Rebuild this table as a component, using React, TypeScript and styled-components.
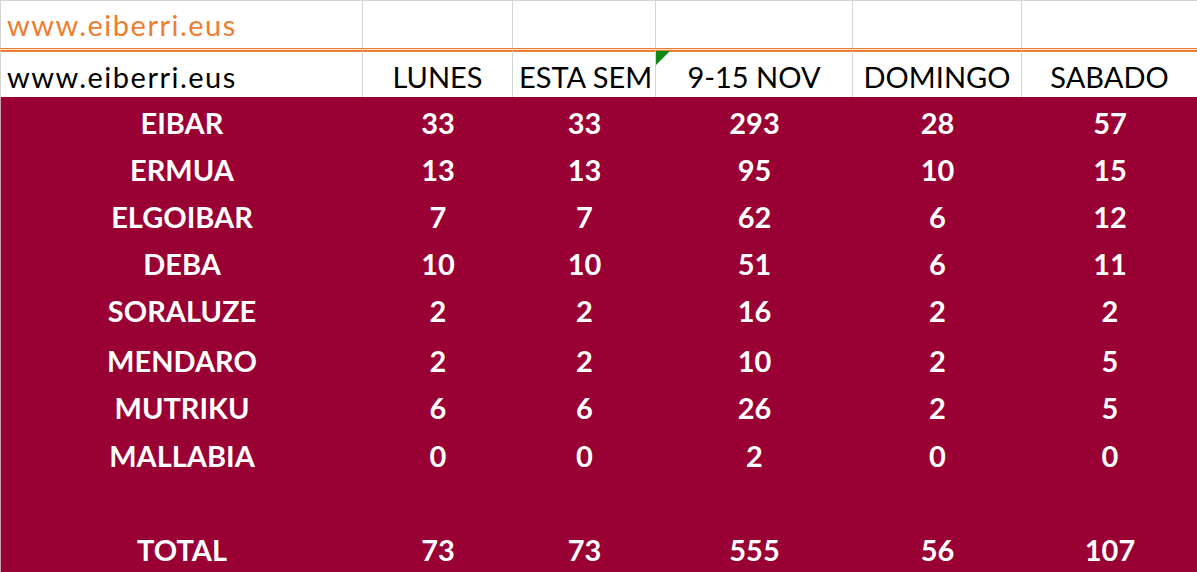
import React from 'react'
import styled, { createGlobalStyle } from 'styled-components'

const GlobalStyle = createGlobalStyle`
  html, body {
    margin: 0;
    padding: 0;
    background: #ffffff;
  }
  body {
    font-family: Lato, 'Open Sans', sans-serif;
  }
`

const COLS = '362px 150px 143px 197px 169px 176px'

const Sheet = styled.div`
  width: 1197px;
  height: 572px;
  overflow: hidden;
  background: #ffffff;
`

const TitleRow = styled.div`
  display: grid;
  grid-template-columns: ${COLS};
  height: 47px;
  border-top: 1px solid #d4d4d4;
`

const DoubleRule = styled.div`
  height: 1px;
  background: #ed7d31;
  border-bottom: 1px solid #fbe3cf;
  box-shadow: 0 2px 0 #ed7d31;
  margin-bottom: 1px;
`

const HeaderRow = styled.div`
  display: grid;
  grid-template-columns: ${COLS};
  height: 46px;
`

const WhiteCell = styled.div<{ $align?: 'left' | 'center'; $pt?: number }>`
  position: relative;
  display: flex;
  align-items: center;
  justify-content: ${(p) => (p.$align === 'left' ? 'flex-start' : 'center')};
  padding-left: ${(p) => (p.$align === 'left' ? '6px' : '0')};
  padding-top: ${(p) => p.$pt ?? 0}px;
  border-left: 1px solid #d4d4d4;
  overflow: hidden;
  white-space: nowrap;
  font-size: 29px;
  color: #000000;
`

const SiteText = styled.span<{ $orange?: boolean }>`
  color: ${(p) => (p.$orange ? '#ed7d31' : '#000000')};
  letter-spacing: 1.5px;
`

const ErrorFlag = styled.span`
  position: absolute;
  top: 0;
  left: 0;
  width: 0;
  height: 0;
  border-top: 14px solid #118811;
  border-right: 14px solid transparent;
`

const Body = styled.div`
  background: #990033;
  padding-top: 2px;
  height: 100%;
  border-left: 1px solid #c9a0ae;
`

const DataRow = styled.div<{ $h: number }>`
  display: grid;
  grid-template-columns: ${COLS};
  height: ${(p) => p.$h}px;
`

const DataCell = styled.div`
  display: flex;
  align-items: center;
  justify-content: center;
  color: #ffffff;
  font-weight: 700;
  font-size: 29px;
  white-space: nowrap;
`

const rows: { name: string; vals: (number | string)[]; h: number }[] = [
  { name: 'EIBAR', vals: [33, 33, 293, 28, 57], h: 47 },
  { name: 'ERMUA', vals: [13, 13, 95, 10, 15], h: 47 },
  { name: 'ELGOIBAR', vals: [7, 7, 62, 6, 12], h: 47 },
  { name: 'DEBA', vals: [10, 10, 51, 6, 11], h: 47 },
  { name: 'SORALUZE', vals: [2, 2, 16, 2, 2], h: 47 },
  { name: 'MENDARO', vals: [2, 2, 10, 2, 5], h: 53 },
  { name: 'MUTRIKU', vals: [6, 6, 26, 2, 5], h: 41 },
  { name: 'MALLABIA', vals: [0, 0, 2, 0, 0], h: 55 },
  { name: '', vals: ['', '', '', '', ''], h: 43 },
  { name: 'TOTAL', vals: [73, 73, 555, 56, 107], h: 47 },
]

export default function App() {
  return (
    <>
      <GlobalStyle />
      <Sheet>
        <TitleRow>
          <WhiteCell $align='left'>
            <SiteText $orange>www.eiberri.eus</SiteText>
          </WhiteCell>
          <WhiteCell />
          <WhiteCell />
          <WhiteCell />
          <WhiteCell />
          <WhiteCell />
        </TitleRow>
        <DoubleRule />
        <HeaderRow>
          <WhiteCell $align='left' $pt={4}>
            <SiteText>www.eiberri.eus</SiteText>
          </WhiteCell>
          <WhiteCell $pt={4}>LUNES</WhiteCell>
          <WhiteCell $align='left' $pt={4}>ESTA SEM</WhiteCell>
          <WhiteCell $pt={4}>
            <ErrorFlag />
            9-15 NOV
          </WhiteCell>
          <WhiteCell $pt={4}>DOMINGO</WhiteCell>
          <WhiteCell $pt={4}>SABADO</WhiteCell>
        </HeaderRow>
        <Body>
          {rows.map((r, i) => (
            <DataRow key={i} $h={r.h}>
              <DataCell>{r.name}</DataCell>
              {r.vals.map((v, j) => (
                <DataCell key={j}>{v}</DataCell>
              ))}
            </DataRow>
          ))}
        </Body>
      </Sheet>
    </>
  )
}
